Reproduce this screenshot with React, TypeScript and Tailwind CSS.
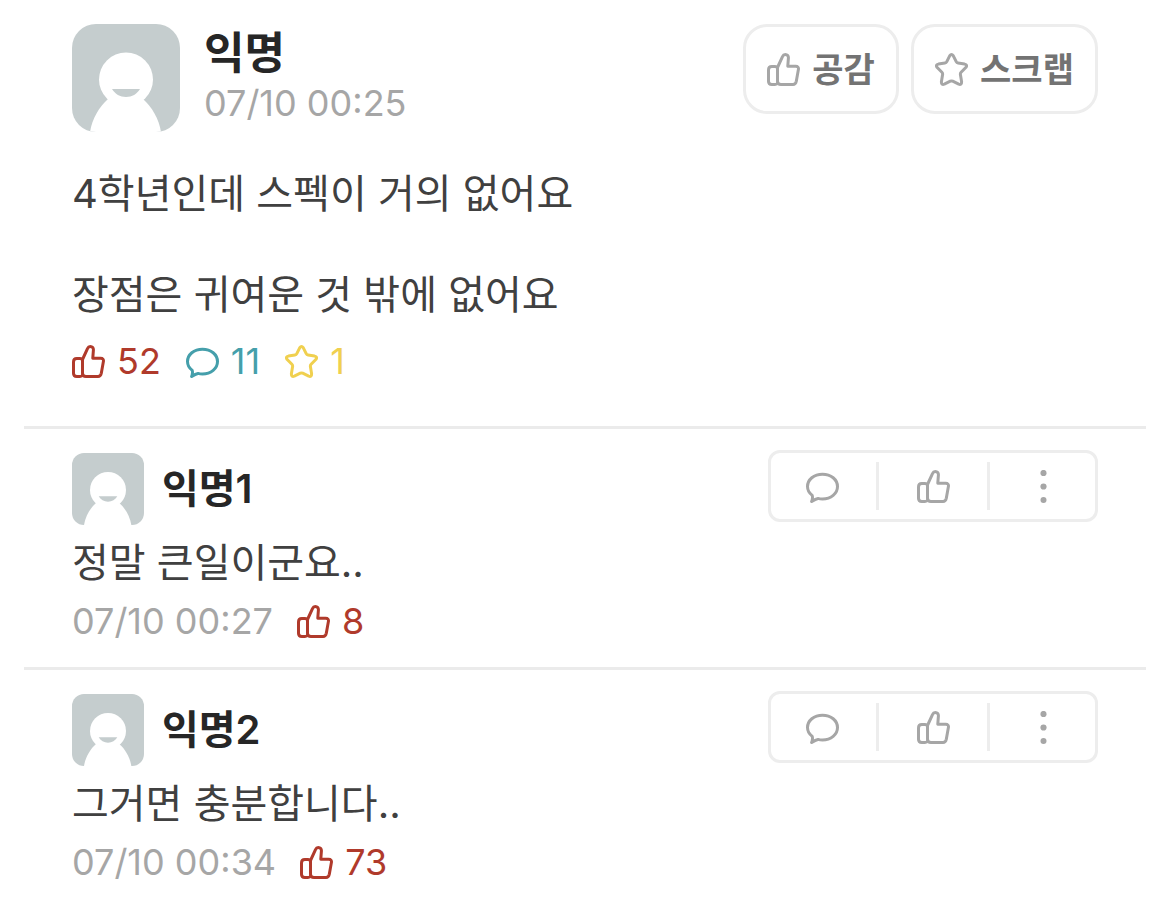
import React from "react";

const FONT = "font-['Inter','Noto_Sans_CJK_KR',sans-serif]";

type IconProps = { className?: string };

function ThumbIcon({ className = "" }: IconProps) {
  return (
    <svg aria-hidden="true" viewBox="0 0 33 33" className={`h-[33px] w-[33px] shrink-0 ${className}`} fill="none" stroke="currentColor" strokeWidth="3" strokeLinejoin="round" strokeLinecap="round">
      <path d="M10.5 14.5 15.6 3.4C16.2 2 17.2 1.5 18.3 1.5 20.4 1.5 21.6 3 21.4 5.2L20.8 13.2H28.6C30.8 13.2 31.8 14.5 31.4 16.5L29.3 28.2C28.8 30.6 27.8 31.5 26 31.5H14C11.8 31.5 10.5 30.4 10.5 28.2Z" />
      <path d="M10.5 15C10 14 9.2 13.6 8 13.6H4.8C2.6 13.6 1.5 14.8 1.5 17V28.2C1.5 30.4 2.6 31.5 4.8 31.5H8C9.2 31.5 10 31.2 10.5 30" />
    </svg>
  );
}

function BubbleIcon({ className = "" }: IconProps) {
  return (
    <svg aria-hidden="true" viewBox="0 0 33 33" className={`h-[33px] w-[33px] shrink-0 ${className}`} fill="none" stroke="currentColor" strokeWidth="3" strokeLinejoin="round" strokeLinecap="round">
      <path d="M16.5 4.2C25 4.2 31.5 9.6 31.5 16.6S25 29 16.5 29C14.9 29 13.4 28.8 12 28.4 9.6 28.8 7.8 30 5.6 31.5 6.6 29.2 6.7 27.2 6.2 25.4 3.2 23.1 1.5 20 1.5 16.6 1.5 9.6 8 4.2 16.5 4.2Z" />
    </svg>
  );
}

function StarIcon({ className = "" }: IconProps) {
  return (
    <svg aria-hidden="true" viewBox="0 0 33 33" className={`h-[33px] w-[33px] shrink-0 ${className}`} fill="none" stroke="currentColor" strokeWidth="3" strokeLinejoin="round">
      <path d="M14.8 2.7Q16.5 0.3 18.2 2.7L21.2 8.7Q21.8 9.9 23.1 10.1L29.6 11.1Q32.8 11.9 30.8 14.5L26.1 19.3Q25.2 20.2 25.4 21.5L26.6 28.8Q26.7 32.2 23.7 31.2L17.7 28.2Q16.5 27.6 15.3 28.2L9.3 31.2Q6.3 32.2 6.4 28.8L7.6 21.5Q7.8 20.2 6.9 19.3L2.2 14.5Q0.2 11.9 3.4 11.1L9.9 10.1Q11.2 9.9 11.8 8.7Z" />
    </svg>
  );
}

function DotsIcon() {
  return (
    <svg aria-hidden="true" viewBox="0 0 33 33" className="h-[33px] w-[33px]" fill="currentColor">
      <circle cx="16.5" cy="3" r="3.1" />
      <circle cx="16.5" cy="16.5" r="3.1" />
      <circle cx="16.5" cy="30" r="3" />
    </svg>
  );
}

function Avatar({ className }: { className: string }) {
  return (
    <svg role="img" aria-label="프로필" viewBox="0 0 108 108" className={`shrink-0 bg-[#c5cdce] ${className}`} fill="#fff">
      <circle cx="54" cy="55.5" r="27" />
      <path d="M18 108C20 95 27 83 36 75H71C80 83 87 95 89 108Z" />
      <path d="M40 65H68C65 70 60 73 54 73S43 70 40 65Z" fill="#c5cdce" />
    </svg>
  );
}

function Comment({ name, text, time, likes }: { name: string; text: string; time: string; likes: number }) {
  return (
    <article className="mx-6 border-t-[3px] border-[#ebebeb] px-12 pb-[22px]">
      <header className="flex items-start justify-between pt-[21px]">
        <div className="flex items-center gap-[18px] pt-[3px]">
          <Avatar className="h-[72px] w-[72px] rounded-[12px]" />
          <h2 className="text-[40px] leading-[48px] font-semibold text-[#262626]">{name}</h2>
        </div>
        <div className="flex h-[72px] w-[330px] items-center rounded-[12px] border-[3px] border-[#ededed] text-[#a6a6a6]">
          <button aria-label="답글" className="flex h-12 flex-1 items-center justify-center pr-0.5"><BubbleIcon /></button>
          <button aria-label="공감" className="flex h-12 w-[114px] items-center justify-center border-x-[3px] border-[#ededed]"><ThumbIcon /></button>
          <button aria-label="더보기" className="flex h-12 flex-1 items-center justify-center pl-0.5"><DotsIcon /></button>
        </div>
      </header>
      <p className="mt-[14px] text-[40px] leading-[48px] text-[#404040]">{text}</p>
      <div className="mt-[10px] flex items-center gap-6 text-[36px] leading-[48px]">
        <time className="text-[#a6a6a6]">{time}</time>
        <span className="flex items-center gap-3 text-[#b03a2b]"><ThumbIcon />{likes}</span>
      </div>
    </article>
  );
}

export default function App() {
  return (
    <main className={`${FONT} bg-white`}>
      <article className="px-[72px] pt-6 pb-[41px]">
        <header className="flex items-start justify-between">
          <div className="flex gap-6">
            <Avatar className="h-[108px] w-[108px] rounded-[24px]" />
            <div className="pt-1">
              <h1 className="text-[44px] leading-[50px] font-semibold text-[#262626]">익명</h1>
              <time className="block text-[36px] leading-[50px] text-[#a6a6a6]">07/10 00:25</time>
            </div>
          </div>
          <div className="flex gap-3 text-[34px] font-semibold text-[#737373]">
            <button className="flex h-[90px] w-[156px] items-center justify-center gap-3 rounded-[24px] border-[3px] border-[#ededed]"><ThumbIcon className="text-[#a6a6a6]" />공감</button>
            <button className="flex h-[90px] w-[187px] items-center justify-center gap-3 rounded-[24px] border-[3px] border-[#ededed]"><StarIcon className="text-[#a6a6a6]" />스크랩</button>
          </div>
        </header>
        <div className="mt-9 text-[40px] leading-[51px] text-[#404040]">
          <p>4학년인데 스펙이 거의 없어요</p>
          <p className="mt-[50px]">장점은 귀여운 것 밖에 없어요</p>
        </div>
        <div className="mt-[17px] flex items-center gap-[25px] text-[36px] leading-[48px]">
          <span className="flex items-center gap-3 text-[#b03a2b]"><ThumbIcon />52</span>
          <span className="flex items-center gap-3 text-[#459fab]"><BubbleIcon />11</span>
          <span className="flex items-center gap-3 text-[#f0d04f]"><StarIcon />1</span>
        </div>
      </article>
      <Comment name="익명1" text="정말 큰일이군요.." time="07/10 00:27" likes={8} />
      <Comment name="익명2" text="그거면 충분합니다.." time="07/10 00:34" likes={73} />
    </main>
  );
}
